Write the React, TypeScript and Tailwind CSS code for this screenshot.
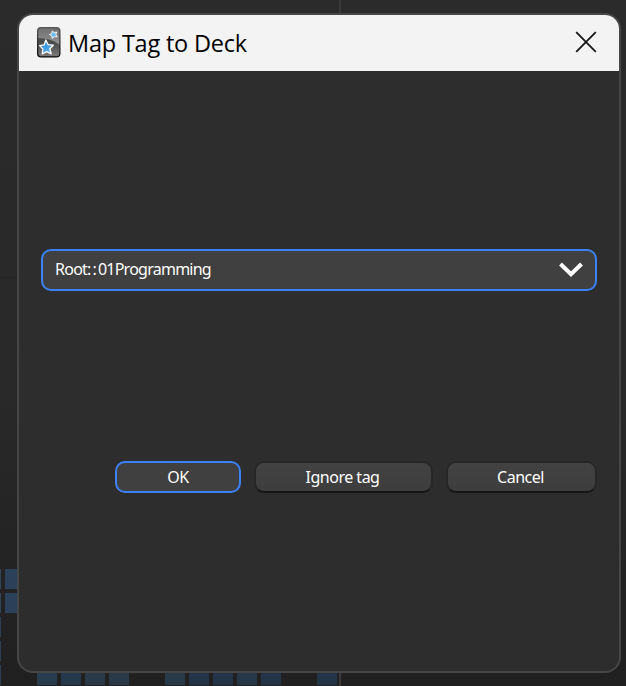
const tiles: [number, number, string][] = [
  [-19, 569, '#30445c'], [-19, 593, '#30445c'], [-19, 617, '#2d3f50'], [-19, 641, '#2d3f50'], [-19, 665, '#2d3f50'],
  [5, 569, '#2d4059'], [5, 593, '#2c4059'],
  [37, 665, '#293b4e'], [61, 665, '#26384c'], [85, 665, '#293947'], [109, 665, '#293947'],
  [165, 665, '#283948'], [189, 665, '#233448'], [213, 665, '#233448'], [237, 665, '#263747'], [261, 665, '#233449'],
  [317, 665, '#233348'],
];

function Heatmap() {
  return (
    <svg className="absolute inset-0" width="626" height="686" aria-hidden="true">
      <rect x="0" y="277" width="18" height="2" fill="#252525" />
      <rect x="339" y="0" width="2" height="686" fill="#3a3a3a" />
      {tiles.map(([x, y, fill]) => (
        <rect key={`${x}-${y}`} x={x} y={y} width="20" height="20" fill={fill} />
      ))}
    </svg>
  );
}

function AppIcon() {
  return (
    <svg className="-mt-[2px]" width="24" height="31" viewBox="0 0 24 31" aria-hidden="true">
      <defs>
        <linearGradient id="body" x1="0" y1="0" x2="0" y2="1">
          <stop offset="0" stopColor="#555" />
          <stop offset=".5" stopColor="#4a4a4a" />
          <stop offset="1" stopColor="#7a7a7a" />
        </linearGradient>
        <linearGradient id="gloss" x1="0" y1="0" x2="0" y2="1">
          <stop offset="0" stopColor="#6e6e6e" />
          <stop offset="1" stopColor="#969696" />
        </linearGradient>
        <linearGradient id="star" x1="0" y1="0" x2="1" y2="1">
          <stop offset="0" stopColor="#2484d4" />
          <stop offset="1" stopColor="#66b9f4" />
        </linearGradient>
        <linearGradient id="edge" x1="0" y1="0" x2="0" y2="1">
          <stop offset="0" stopColor="#555" />
          <stop offset="1" stopColor="#050505" />
        </linearGradient>
      </defs>
      <rect x=".6" y=".6" width="22.3" height="29.3" rx="3.5" fill="url(#body)" />
      <path d="M1 4Q1 1 4 1H20Q23 1 23 4V18Q14 11 1 11Z" fill="url(#gloss)" />
      <rect x=".6" y=".6" width="22.3" height="29.3" rx="3.5" fill="none" stroke="url(#edge)" strokeWidth="1.2" />
      <path d="M8.8 13L11.2 17.7L16.3 18.2L12.8 21.8L14.2 26.8L9.6 24.6L5.2 27L5.9 22L2.6 18.6L7.2 17.8Z" fill="url(#star)" stroke="#fff" strokeWidth="1.3" strokeLinejoin="round" />
      <path d="M15.2 4L17.2 5.5L19.8 5L18.8 7.5L20.2 9.9L17.4 9.7L15.2 11.4L14.8 8.8L12.5 7.5L14.9 6.5Z" fill="#69b9ef" stroke="#fff" strokeWidth=".9" strokeLinejoin="round" />
    </svg>
  );
}

export default function App() {
  return (
    <div className="relative h-[686px] w-[626px] overflow-hidden bg-[linear-gradient(to_bottom,#2b2b2b_0%,#282828_60%,#202020_100%)] font-['Noto_Sans',sans-serif]">
      <Heatmap />
      <div className="absolute left-[17px] top-[13px] flex h-[660px] w-[604px] flex-col overflow-hidden rounded-[16px] border-2 border-[#464646] bg-[#2d2d2d]">
        <header className="flex h-14 shrink-0 items-center bg-[#f3f3f3] pl-[18px] pr-[22px]">
          <AppIcon />
          <h1 className="ml-[7px] whitespace-nowrap font-['Open_Sans',sans-serif] text-[23.5px] leading-8 tracking-[-0.2px] text-black">Map Tag to Deck</h1>
          <button className="-mt-[2px] ml-auto" aria-label="Close">
            <svg width="22" height="22" viewBox="0 0 22 22" fill="none" stroke="#161616" strokeWidth="1.8">
              <path d="M1.2 1.2L20.8 20.8M20.8 1.2L1.2 20.8" />
            </svg>
          </button>
        </header>
        <main className="flex flex-1 flex-col px-[22px] pt-[178px] text-base leading-6 text-white">
          <div className="flex h-[42px] items-center justify-between rounded-[10px] border-2 border-[#3b82f6] bg-[#404040] pl-3 pr-3">
            <span className="-mt-[3px] tracking-[-0.75px]">Root<span className="tracking-[1.1px]">::</span>01Programming</span>
            <svg width="24" height="16" viewBox="0 0 24 16" fill="none" stroke="#fff" strokeWidth="4">
              <path d="M1.5 2L12 12.3L22.5 2" />
            </svg>
          </div>
          <div className="mt-[170px] flex justify-end gap-[13px] tracking-[-0.5px]">
            <button className="flex h-8 w-[126px] items-center justify-center rounded-[10px] border-2 border-[#3b82f6] bg-[#404040]">OK</button>
            <button className="flex h-8 w-[179px] items-center justify-center rounded-[10px] border-2 border-[#272727] border-b-[#151515] bg-[linear-gradient(#424242,#3d3d3d)] bg-origin-border pr-[2px]">Ignore tag</button>
            <button className="flex h-8 w-[151px] items-center justify-center rounded-[10px] border-2 border-[#272727] border-b-[#151515] bg-[linear-gradient(#424242,#3d3d3d)] bg-origin-border pr-[2px]">Cancel</button>
          </div>
        </main>
      </div>
    </div>
  );
}
